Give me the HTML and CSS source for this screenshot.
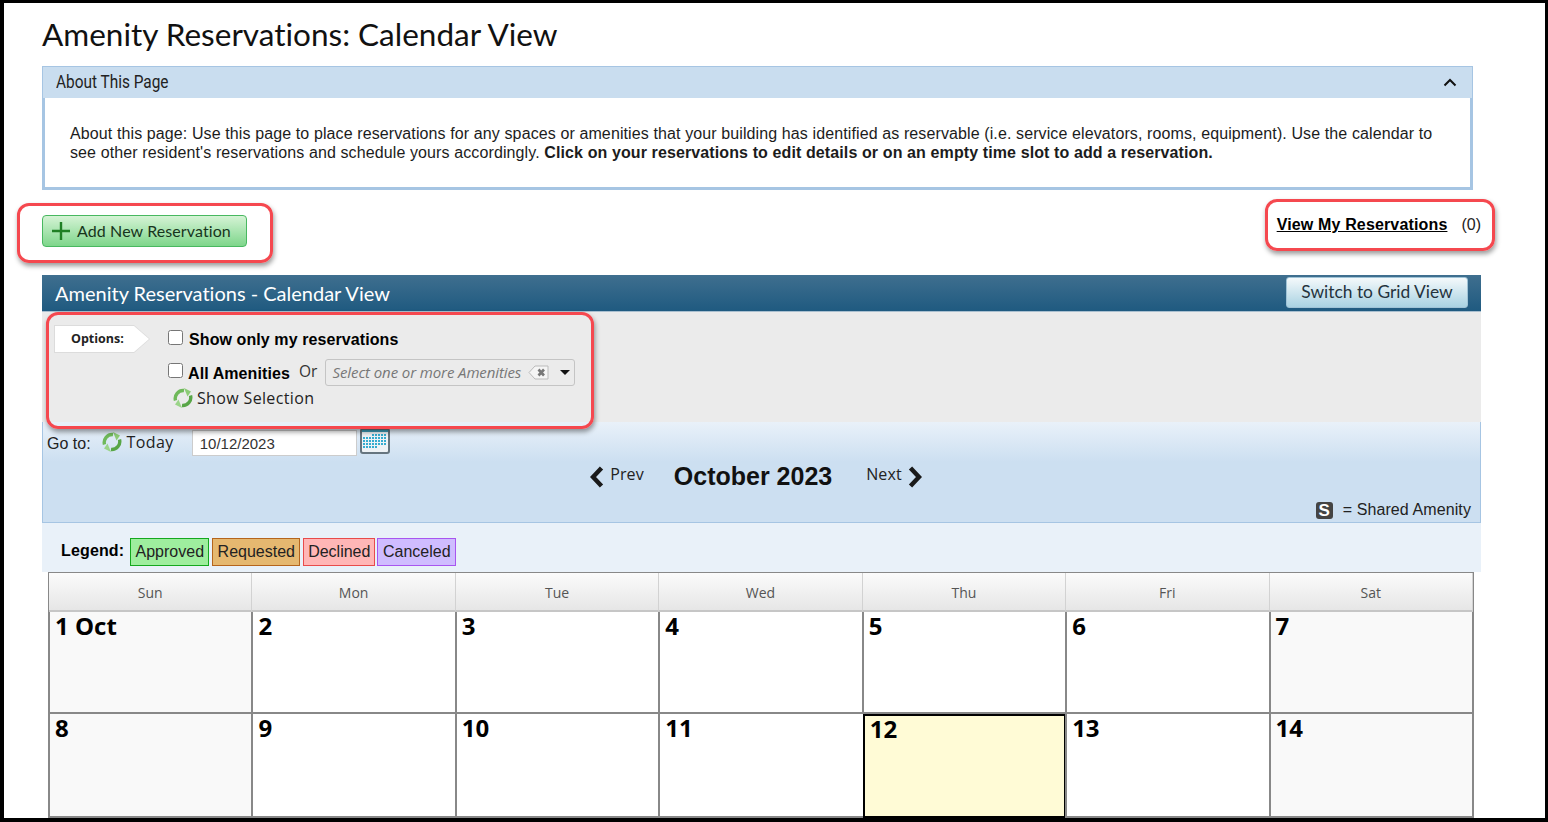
FILE: index.html
```html
<!DOCTYPE html>
<html lang="en">

<head>
    <meta charset="UTF-8">
    <meta name="viewport" content="width=device-width, initial-scale=1.0">
    <title>Amenity Reservations: Calendar View</title>
    <link rel="stylesheet" href="styles.css">
</head>

<body>
    <div class="frame">
        <svg width="0" height="0" class="defs">
            <defs>
                <symbol id="sync" viewBox="0 0 20 20">
                    <path d="M2.500 12.500A8 8 0 0 1 11 2.500" fill="none" stroke="#6fb95a" stroke-width="3.400" />
                    <path d="M11 0L18 3.500L14.500 8.500Z" fill="#8ccb76" />
                    <path d="M17.500 7.500A8 8 0 0 1 9 17.500" fill="none" stroke="#58a647" stroke-width="3.400" />
                    <path d="M9 20L2 16.500L5.500 11.500Z" fill="#9ad488" />
                </symbol>
                <pattern id="dots" width="3" height="3" patternUnits="userSpaceOnUse">
                    <rect width="2" height="2" fill="#35acd0" />
                </pattern>
            </defs>
        </svg>

        <h1 class="page-title">Amenity Reservations: Calendar View</h1>

        <div class="about-panel">
            <div class="about-head">
                <span class="about-title">About This Page</span>
                <svg class="about-toggle" width="14" height="9" viewBox="0 0 14 9">
                    <path d="M1.500 7.500L7 2L12.500 7.500" fill="none" stroke="#111" stroke-width="2" />
                </svg>
            </div>
            <div class="about-body">
                About this page: Use this page to place reservations for any spaces or amenities that your building has identified as reservable (i.e. service elevators, rooms, equipment). Use the calendar to see other resident's reservations and schedule yours accordingly. <b>Click on your reservations to edit details or on an empty time slot to add a reservation.</b>
            </div>
        </div>

        <div class="action-row">
            <button class="add-button">
                <svg width="18" height="18" viewBox="0 0 18 18">
                    <path d="M9 0V18M0 9H18" stroke="#1f7f24" stroke-width="2.400" />
                </svg>
                <span>Add New Reservation</span>
            </button>
            <div class="my-reservations"><a href="#">View My Reservations</a><span>(0)</span></div>
        </div>

        <div class="calendar-panel">
            <div class="calendar-head">
                <span class="calendar-title">Amenity Reservations - Calendar View</span>
                <button class="switch-button">Switch to Grid View</button>
            </div>

            <div class="options">
                <div class="options-tag"><span>Options:</span></div>
                <div class="options-fields">
                    <label class="option-line first-line"><input type="checkbox"><b>Show only my reservations</b></label>
                    <div class="option-line second-line">
                        <label class="all-amenities"><input type="checkbox"><b>All Amenities</b></label>
                        <span class="or-text">Or</span>
                        <div class="amenity-select">
                            <i>Select one or more Amenities</i>
                            <svg class="clear-icon" width="21" height="15" viewBox="0 0 21 15">
                                <path d="M7 1H20V14H7L1 7.500Z" fill="#f5f5f5" stroke="#bbb" />
                                <path d="M10.500 4.500L16 10.500M16 4.500L10.500 10.500" stroke="#777" stroke-width="2.600" />
                            </svg>
                            <span class="select-arrow"></span>
                        </div>
                    </div>
                    <div class="show-selection">
                        <svg width="20" height="20"><use href="#sync" /></svg>
                        Show Selection
                    </div>
                </div>
            </div>

            <div class="toolbar">
                <div class="goto-row">
                    <span class="goto-label">Go to:</span>
                    <span class="today"><svg width="20" height="20"><use href="#sync" /></svg>Today</span>
                    <input class="date-input" type="text" value="10/12/2023">
                    <svg class="calendar-icon" width="30" height="26" viewBox="0 0 30 26">
                        <rect x="1" y="1" width="28" height="24" rx="2" fill="#eef2f5" stroke="#66757f" stroke-width="2" />
                        <rect x="2" y="2" width="26" height="2" fill="#3d9db8" />
                        <rect x="12" y="6" width="15" height="5" fill="url(#dots)" />
                        <rect x="3" y="9" width="24" height="9" fill="url(#dots)" />
                        <rect x="3" y="18" width="15" height="3" fill="url(#dots)" />
                    </svg>
                </div>
                <div class="month-row">
                    <a class="month-link" href="#">
                        <svg width="14" height="22" viewBox="0 0 14 22"><path d="M11.500 2L3 11L11.500 20" fill="none" stroke="#1a1a1a" stroke-width="4.500" /></svg>
                        <span>Prev</span>
                    </a>
                    <span class="month-name">October 2023</span>
                    <a class="month-link" href="#">
                        <span>Next</span>
                        <svg width="14" height="22" viewBox="0 0 14 22"><path d="M2.500 2L11 11L2.500 20" fill="none" stroke="#1a1a1a" stroke-width="4.500" /></svg>
                    </a>
                </div>
                <div class="shared-row"><span class="shared-icon">S</span>= Shared Amenity</div>
            </div>

            <div class="legend">
                <b>Legend:</b>
                <span class="status approved">Approved</span>
                <span class="status requested">Requested</span>
                <span class="status declined">Declined</span>
                <span class="status canceled">Canceled</span>
            </div>

            <div class="calendar">
                <div class="day-name">Sun</div>
                <div class="day-name">Mon</div>
                <div class="day-name">Tue</div>
                <div class="day-name">Wed</div>
                <div class="day-name">Thu</div>
                <div class="day-name">Fri</div>
                <div class="day-name">Sat</div>

                <div class="day weekend">1 Oct</div>
                <div class="day">2</div>
                <div class="day">3</div>
                <div class="day">4</div>
                <div class="day">5</div>
                <div class="day">6</div>
                <div class="day weekend saturday">7</div>

                <div class="day weekend">8</div>
                <div class="day">9</div>
                <div class="day">10</div>
                <div class="day">11</div>
                <div class="day today-cell">12</div>
                <div class="day">13</div>
                <div class="day weekend saturday">14</div>
            </div>
        </div>

        <div class="callout callout-add"></div>
        <div class="callout callout-view"></div>
        <div class="callout callout-options"></div>
    </div>
</body>

</html>
```

FILE: styles.css
```css
html,
body {
    margin: 0;
    height: 100%;
    background: #000;
    overflow: hidden;
}

.frame {
    position: relative;
    box-sizing: border-box;
    width: 1541px;
    height: 815px;
    margin: 3px 0 0 4px;
    padding-left: 38px;
    background: #fff;
    overflow: hidden;
    font-family: "Liberation Sans", Arial, sans-serif;
    color: #000;
}

.defs {
    position: absolute;
}

.page-title {
    margin: 0;
    height: 63px;
    font: 400 31.500px/63px Lato, sans-serif;
    font-variant-ligatures: none;
    color: #111;
}

.about-panel {
    box-sizing: border-box;
    width: 1431px;
    height: 124px;
    border: 1px solid #a6c5e3;
    display: flex;
    flex-direction: column;
}

.about-head {
    box-sizing: border-box;
    height: 31px;
    flex: none;
    display: flex;
    justify-content: space-between;
    align-items: center;
    padding: 0 15px 2px 13px;
    background: #c9ddef;
}

.about-title {
    font: 400 18px Roboto, sans-serif;
    color: #222;
    transform: scaleX(0.855);
    transform-origin: left center;
}

.about-toggle {
    margin-top: 2px;
}

.about-body {
    flex: 1;
    padding: 26px 25px 0;
    border: solid #a6c5e3;
    border-width: 0 2px 2px;
    font-size: 16px;
    line-height: 19px;
    letter-spacing: 0.110px;
    color: #1c1c1c;
}

.action-row {
    display: flex;
    justify-content: space-between;
    align-items: flex-start;
    width: 1439px;
    height: 85px;
}

.add-button {
    display: flex;
    align-items: center;
    gap: 7px;
    box-sizing: border-box;
    width: 205px;
    height: 32px;
    margin-top: 25px;
    padding: 0 0 0 9px;
    border: 1px solid #48b860;
    border-radius: 4px;
    background: linear-gradient(#d5f3d5, #7ed68b);
    font: 400 16px Lato, sans-serif;
    font-variant-ligatures: none;
    letter-spacing: 0.100px;
    color: #17351c;
}

.add-button span {
    margin-top: -2px;
}

.my-reservations {
    margin-top: 25px;
    font-size: 16px;
    line-height: 19px;
}

.my-reservations a {
    font-weight: 700;
    letter-spacing: 0.150px;
    color: #000;
}

.my-reservations span {
    margin-left: 14px;
    color: #222;
}

.calendar-panel {
    width: 1439px;
}

.calendar-head {
    box-sizing: border-box;
    height: 37px;
    display: flex;
    justify-content: space-between;
    align-items: center;
    padding: 0 13px;
    background: linear-gradient(#3f6f8f, #1f5a80);
    border-bottom: 1px solid #a9bfcf;
}

.calendar-title {
    font: 400 20px Lato, sans-serif;
    font-variant-ligatures: none;
    color: #fff;
}

.switch-button {
    box-sizing: border-box;
    width: 182px;
    height: 31px;
    margin-top: -2px;
    padding: 0 0 2px;
    border: 1px solid #9fc3d6;
    border-radius: 3px;
    background: linear-gradient(#f4f9fb, #a9d2e2);
    font: 400 17.400px Lato, sans-serif;
    font-variant-ligatures: none;
    color: #24333d;
}

.options {
    height: 110px;
    display: flex;
    background: #ebebeb;
}

.options-tag {
    width: 96px;
    height: 28px;
    margin: 13px 0 0 12px;
    background: #dcdcdc;
    clip-path: polygon(0 0, 80px 0, 96px 50%, 80px 100%, 0 100%);
    flex: none;
}

.options-tag span {
    display: block;
    height: 26px;
    margin: 1px;
    padding-left: 16px;
    background: #fff;
    clip-path: polygon(0 0, 79px 0, 94px 50%, 79px 100%, 0 100%);
    font: 700 12.500px/25px "Open Sans", sans-serif;
    color: #222;
}

.options-fields {
    margin-left: 18px;
    padding-top: 15px;
}

.option-line input,
.all-amenities input {
    width: 15px;
    height: 15px;
    margin: 0 5px 0 0;
    vertical-align: 1px;
}

.option-line {
    display: flex;
    align-items: center;
    font-size: 16px;
    letter-spacing: 0.090px;
}

.first-line {
    height: 26px;
}

.first-line input {
    margin: -6px 6px 0 0;
}

.second-line {
    height: 28px;
    margin-top: 6px;
}

.or-text {
    margin: -4px 0 0 9px;
    font: 400 15.500px "Open Sans", sans-serif;
    color: #333;
}

.amenity-select {
    box-sizing: border-box;
    width: 250px;
    height: 27px;
    margin: -2px 0 0 7px;
    display: flex;
    align-items: center;
    padding-left: 7px;
    border: 1px solid #c4c4c4;
    border-radius: 3px;
    font: 400 15px "Open Sans", sans-serif;
    letter-spacing: -0.100px;
    color: #777;
    white-space: nowrap;
}

.clear-icon {
    margin-left: 7px;
    flex: none;
}

.select-arrow {
    margin-left: 11px;
    border: solid transparent;
    border-width: 5px 5px 0;
    border-top-color: #111;
}

.show-selection {
    display: flex;
    align-items: center;
    gap: 4px;
    margin: -2px 0 0 5px;
    height: 26px;
    font: 400 16px "Open Sans", sans-serif;
    letter-spacing: 0.350px;
    color: #222;
}

.toolbar {
    box-sizing: border-box;
    height: 101px;
    padding-left: 4px;
    background: linear-gradient(#e9f1f9, #ccdff1 40%);
    border: solid #a6c5e3;
    border-width: 0 1px 1px;
}

.goto-row {
    display: flex;
    align-items: flex-end;
    height: 34px;
}

.goto-label {
    margin-bottom: 3px;
    font-size: 16px;
    color: #222;
}

.today {
    display: flex;
    align-items: center;
    gap: 5px;
    margin: 0 0 3px 11px;
    font: 400 16px "Open Sans", sans-serif;
    letter-spacing: 0.400px;
    color: #222;
}

.date-input {
    box-sizing: border-box;
    width: 165px;
    height: 26px;
    margin: 0 0 0 18px;
    padding: 1px 7px 0;
    border: 1px solid #ccc;
    background: #fff;
    font: 400 15px "Liberation Sans", sans-serif;
    color: #333;
}

.calendar-icon {
    margin: 0 0 2px 3px;
}

.month-row {
    display: flex;
    align-items: center;
    justify-content: center;
    gap: 30px;
    height: 41px;
    padding-right: 15px;
}

.month-link {
    display: flex;
    align-items: center;
    gap: 6px;
    font: 400 16px "Open Sans", sans-serif;
    letter-spacing: 0.100px;
    color: #222;
    text-decoration: none;
}

.month-link span {
    margin-top: -6px;
}

.month-name {
    margin-right: 4px;
    font-size: 25px;
    font-weight: 700;
    color: #111;
}

.shared-row {
    display: flex;
    justify-content: flex-end;
    align-items: center;
    height: 24px;
    padding: 1px 9px 0 0;
    font-size: 16px;
    letter-spacing: 0.100px;
    color: #222;
}

.shared-icon {
    box-sizing: border-box;
    width: 17px;
    height: 17px;
    margin-right: 10px;
    border-radius: 3px;
    background: #444;
    font: 700 17px/17px "Liberation Sans", sans-serif;
    text-align: center;
    color: #fff;
}

.legend {
    box-sizing: border-box;
    height: 49px;
    display: flex;
    align-items: center;
    gap: 3px;
    padding: 9px 0 0 19px;
    background: #e9f1f9;
}

.legend b {
    margin: 0 3px 3px 0;
    font-size: 16px;
    letter-spacing: 0.150px;
}

.status {
    box-sizing: border-box;
    height: 28px;
    border: 1px solid;
    font-size: 16px;
    line-height: 26px;
    text-align: center;
    color: #222;
}

.approved {
    width: 79px;
    background: #9eee9e;
    border-color: #14a81e;
}

.requested {
    width: 88px;
    background: #e5b870;
    border-color: #b5651d;
}

.declined {
    width: 72px;
    background: #ffb6b6;
    border-color: #e84b4b;
}

.canceled {
    width: 79px;
    margin-left: -1px;
    background: #cfbcff;
    border-color: #a855f0;
}

.calendar {
    display: grid;
    grid-template-columns: repeat(7, 1fr);
    grid-template-rows: 39px 102px 104px;
    box-sizing: border-box;
    width: 1426px;
    margin-left: 6px;
    background: #e9f1f9;
    border: solid #888;
    border-width: 1px 1px 0;
}

.day-name {
    box-sizing: border-box;
    display: flex;
    align-items: center;
    justify-content: center;
    padding-top: 1px;
    background: linear-gradient(#fbfbfb, #e6e6e6);
    border-right: 1px solid #d2d2d2;
    border-bottom: 2px solid #c6c6c6;
    font: 400 14px "Open Sans", sans-serif;
    color: #555;
}

.day {
    box-sizing: border-box;
    margin-left: -1px;
    padding-left: 5px;
    background: #fff;
    border-left: 2px solid #888;
    border-bottom: 2px solid #888;
    font: 700 24px/27px "Open Sans", sans-serif;
    color: #000;
}

.weekend {
    background: #f9f9f9;
}

.saturday {
    border-right: 1px solid #888;
}

.today-cell {
    margin-left: 0;
    background: #fffbd6;
    outline: 2px solid #000;
    outline-offset: -2px;
    padding: 1px 0 0 5px;
}

.callout {
    position: absolute;
    box-sizing: border-box;
    border: 3px solid #f5484f;
    border-radius: 12px;
    box-shadow: 1px 3px 5px rgba(0, 0, 0, 0.4);
    pointer-events: none;
}

.callout-add {
    left: 13px;
    top: 200px;
    width: 256px;
    height: 60px;
}

.callout-view {
    left: 1261px;
    top: 196px;
    width: 230px;
    height: 52px;
}

.callout-options {
    left: 42px;
    top: 309px;
    width: 548px;
    height: 117px;
}
```
